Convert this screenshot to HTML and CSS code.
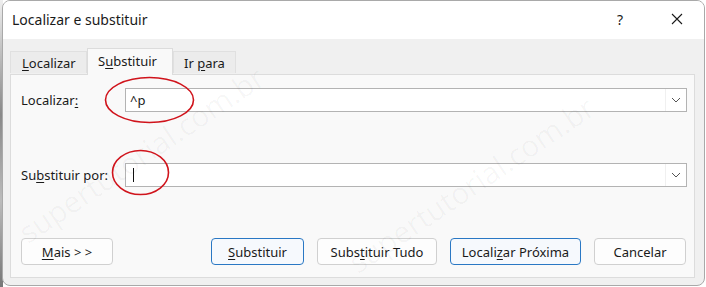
FILE: index.html
```html
<!DOCTYPE html>
<html lang="pt">
<head>
<meta charset="utf-8">
<title>Localizar e substituir</title>
<link rel="stylesheet" href="styles.css">
</head>
<body>
<div class="backdrop"></div>
<div class="window">
  <div class="titlebar">
    <span class="title">Localizar e substituir</span>
    <span class="help">?</span>
    <span class="close">
      <svg width="12" height="12" viewBox="0 0 12 12"><path d="M1 1 L11 11 M11 1 L1 11" stroke="#1a1a1a" stroke-width="1.1" fill="none"/></svg>
    </span>
  </div>
  <div class="client">
    <div class="tabs">
      <div class="tab"><span><u>L</u>ocalizar</span></div>
      <div class="tab active"><span>S<u>u</u>bstituir</span></div>
      <div class="tab"><span>Ir <u>p</u>ara</span></div>
    </div>
    <div class="panel">
      <div class="row">
        <span class="label">Localizar<u>:</u></span>
        <div class="combo">
          <span class="value">^p</span>
          <span class="arrow"><svg width="10" height="6" viewBox="0 0 10 6"><path d="M1 1 L5 5 L9 1" stroke="#555" stroke-width="1" fill="none"/></svg></span>
        </div>
      </div>
      <div class="row row2">
        <span class="label">Su<u>b</u>stituir por:</span>
        <div class="combo">
          <span class="value"><span class="caret"></span></span>
          <span class="arrow"><svg width="10" height="6" viewBox="0 0 10 6"><path d="M1 1 L5 5 L9 1" stroke="#555" stroke-width="1" fill="none"/></svg></span>
        </div>
      </div>
      <div class="buttons">
        <button class="btn w-mais"><span><u>M</u>ais &gt; &gt;</span></button>
        <div class="spacer"></div>
        <div class="group">
          <button class="btn primary w-sub"><span><u>S</u>ubstituir</span></button>
          <button class="btn w-tudo"><span>Subs<u>t</u>ituir Tudo</span></button>
          <button class="btn primary w-prox"><span>Locali<u>z</u>ar Próxima</span></button>
          <button class="btn w-canc"><span>Cancelar</span></button>
        </div>
      </div>
    </div>
  </div>
  <div class="watermark">
    <span class="wm wm1">supertutorial.com.br</span>
    <span class="wm wm2">supertutorial.com.br</span>
  </div>
  <svg class="marks" width="706" height="287" viewBox="0 0 706 287">
    <ellipse cx="149.5" cy="100" rx="44" ry="22.5" fill="none" stroke="#d0141c" stroke-width="1.6"/>
    <ellipse cx="140.5" cy="172.5" rx="28" ry="22" fill="none" stroke="#d0141c" stroke-width="1.6"/>
  </svg>
</div>
</body>
</html>
```
FILE: styles.css
```css
* { box-sizing: border-box; }
html, body {
  margin: 0;
  padding: 0;
  width: 706px;
  height: 287px;
  overflow: hidden;
  background: #ffffff;
  font-family: "Noto Sans", "Open Sans", sans-serif;
  font-size: 13px;
  color: #1a1a1a;
}
.backdrop {
  position: absolute;
  left: 0;
  top: 0;
  width: 3px;
  height: 287px;
  background: linear-gradient(#eee, #888 40%, #bbb 70%, #777);
}
.window {
  position: absolute;
  left: 2px;
  top: 0;
  width: 703px;
  height: 286px;
  border: 1px solid #a9a9a9;
  border-radius: 8px;
  overflow: hidden;
  background: #f0f0f0;
  display: flex;
  flex-direction: column;
}
.titlebar {
  height: 38px;
  background: #ffffff;
  display: flex;
  align-items: center;
  padding-left: 9px;
  flex: none;
}
.title {
  font-size: 14px;
  flex: 1;
  margin-top: -1px;
}
.help {
  font-size: 14px;
  width: 16px;
  margin-right: 38px;
  margin-top: -2px;
}
.close {
  display: flex;
  margin-right: 21px;
  margin-top: -2px;
}
.client {
  flex: 1;
  display: flex;
  flex-direction: column;
  padding: 9px 9px 8px 7px;
}
.tabs {
  display: flex;
  align-items: flex-end;
  height: 26px;
  flex: none;
  position: relative;
  z-index: 2;
}
.tab {
  height: 22px;
  border: 1px solid #e0e0e0;
  border-bottom: none;
  background: #ececec;
  padding: 0 0 0 11px;
  display: flex;
  align-items: center;
  font-size: 13px;
  margin-bottom: 1px;
  white-space: nowrap;
}
.tab:first-child { width: 77px; padding-left: 11px; }
.tab.active {
  height: 27px;
  width: 86px;
  background: #f9f9f9;
  padding: 0 0 2px 10px;
  margin-bottom: -1px;
  border-color: #dcdcdc;
}
.tab:last-child { width: 63px; padding-left: 10px; }
.panel {
  flex: 1;
  border: 1px solid #dcdcdc;
  background: #f9f9f9;
  display: flex;
  flex-direction: column;
  padding: 13px 7px 12px 10px;
}
.row {
  display: flex;
  align-items: center;
  height: 24px;
}
.row2 { margin-top: 51px; }
.label {
  width: 104px;
  flex: none;
  font-size: 13px;
  white-space: nowrap;
}
.combo {
  flex: 1;
  height: 24px;
  border: 1px solid #b3b3b3;
  background: #ffffff;
  display: flex;
  align-items: center;
}
.value {
  flex: 1;
  padding-left: 4px;
  font-size: 13px;
  display: flex;
  align-items: center;
}
.caret {
  display: block;
  width: 1px;
  height: 14px;
  background: #111;
  margin-left: 3px;
}
.arrow {
  width: 21px;
  height: 22px;
  display: flex;
  align-items: center;
  justify-content: center;
  border-left: 1px solid #f0f0f0;
}
.buttons {
  margin-top: 51px;
  display: flex;
  align-items: center;
  height: 27px;
  padding-right: 1px;
}
.spacer { flex: 1; }
.group { display: flex; gap: 13px; }
.btn {
  height: 27px;
  border: 1px solid #d0d0d0;
  border-radius: 4px;
  background: #fdfdfd;
  font-family: "Noto Sans", "Open Sans", sans-serif;
  font-size: 13px;
  color: #1a1a1a;
  padding: 0;
  display: flex;
  align-items: center;
  justify-content: center;
  white-space: nowrap;
}
.btn.primary {
  border: 1px solid #2a78c4;
  background: #f6f9fd;
}
.w-mais { width: 92px; }
.w-sub { width: 93px; }
.w-tudo { width: 120px; }
.w-prox { width: 131px; }
.w-canc { width: 92px; }
u { text-underline-offset: 2px; }
.watermark {
  position: absolute;
  left: 0;
  top: 0;
  width: 703px;
  height: 286px;
  pointer-events: none;
  overflow: hidden;
}
.wm {
  position: absolute;
  font-family: "Open Sans", sans-serif;
  font-size: 30px;
  color: rgba(0, 0, 0, 0.035);
  white-space: nowrap;
  transform: rotate(-34deg);
  transform-origin: left bottom;
}
.wm1 { left: 30px; top: 210px; }
.wm2 { left: 360px; top: 240px; }
.marks {
  position: absolute;
  left: -3px;
  top: -1px;
  pointer-events: none;
}
```
